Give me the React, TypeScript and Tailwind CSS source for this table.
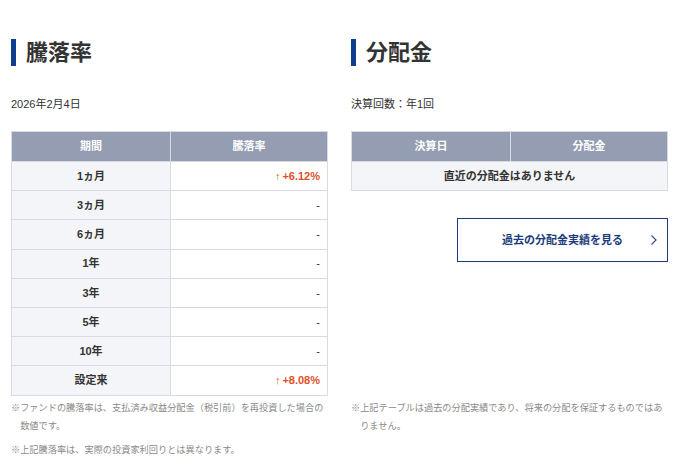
import React from 'react'

const font = { fontFamily: '"Liberation Sans", "Noto Sans CJK JP", sans-serif' }

const rows = [
    { label: '1ヵ月', value: '+6.12%' },
    { label: '3ヵ月', value: '-' },
    { label: '6ヵ月', value: '-' },
    { label: '1年', value: '-' },
    { label: '3年', value: '-' },
    { label: '5年', value: '-' },
    { label: '10年', value: '-' },
    { label: '設定来', value: '+8.08%' },
]

const Heading = ({ title }: { title: string }) => (
    <div className="flex items-center h-[27px]">
        <span className="w-[5px] h-[27px] bg-[#0f3e8f]" />
        <h2 className="ml-[10px] text-[22px] leading-[27px] font-bold text-[#333]">{title}</h2>
    </div>
)

const Value = ({ v }: { v: string }) =>
    v === '-' ? (
        <span className="text-[#333]">-</span>
    ) : (
        <span className="text-[#e0502a] font-bold">
            <span className="font-normal text-[11px] mr-[2px]">↑</span>
            {v}
        </span>
    )

export default function App() {
    return (
        <div className="w-[687px] h-[470px] bg-white pl-[11px] pt-[39px]" style={font}>
            <div className="grid grid-cols-[317px_317px] gap-x-[23px]">
                {/* 騰落率 */}
                <div>
                    <Heading title="騰落率" />
                    <p className="mt-[30px] text-[11px] leading-[16px] text-[#333]">2026年2月4日</p>
                    <div className="mt-[19px] border border-[#d8dbe3] text-[11px]">
                        <div className="flex h-[29px] bg-[#959db2] text-white font-bold">
                            <div className="w-[159px] flex items-center justify-center border-r border-[#d8dbe3]">期間</div>
                            <div className="flex-1 flex items-center justify-center">騰落率</div>
                        </div>
                        {rows.map((r) => (
                            <div key={r.label} className="flex h-[29.2px] border-t border-[#d8dbe3]">
                                <div className="w-[159px] flex items-center justify-center bg-[#f4f5f8] border-r border-[#d8dbe3] font-bold text-[#333]">
                                    {r.label}
                                </div>
                                <div className="flex-1 flex items-center justify-end pr-[7px]">
                                    <Value v={r.value} />
                                </div>
                            </div>
                        ))}
                    </div>
                </div>

                {/* 分配金 */}
                <div>
                    <Heading title="分配金" />
                    <p className="mt-[30px] text-[11px] leading-[16px] text-[#333]">決算回数：年1回</p>
                    <div className="mt-[19px] border border-[#d8dbe3] text-[11px]">
                        <div className="flex h-[29px] bg-[#959db2] text-white font-bold">
                            <div className="w-[159px] flex items-center justify-center border-r border-[#d8dbe3]">決算日</div>
                            <div className="flex-1 flex items-center justify-center">分配金</div>
                        </div>
                        <div className="flex h-[29.2px] items-center justify-center border-t border-[#d8dbe3] bg-[#f4f5f8] font-bold text-[#333]">
                            直近の分配金はありません
                        </div>
                    </div>
                    <div className="flex justify-end mt-[27px]">
                        <button
                            type="button"
                            className="relative w-[211px] h-[44px] border border-[#1c3c7c] flex items-center justify-center text-[11px] font-bold text-[#1c3c7c]"
                        >
                            過去の分配金実績を見る
                            <svg
                                className="absolute right-[9px] top-1/2 -translate-y-1/2"
                                width="8"
                                height="12"
                                viewBox="0 0 8 12"
                                fill="none"
                                stroke="#3b4f80"
                                strokeWidth="1.2"
                            >
                                <path d="M1.5 1.5 L6 6 L1.5 10.5" />
                            </svg>
                        </button>
                    </div>
                </div>

                {/* notes */}
                <div className="mt-[3px] text-[9.2px] leading-[18px] text-[#8a8a8a]">
                    <p className="whitespace-nowrap">
                        ※ファンドの騰落率は、支払済み収益分配金（税引前）を再投資した場合の
                    </p>
                    <p className="pl-[1em]">数値です。</p>
                    <p className="mt-[6px]">※上記騰落率は、実際の投資家利回りとは異なります。</p>
                </div>
                <div className="mt-[3px] text-[9.2px] leading-[18px] text-[#8a8a8a]">
                    <p className="whitespace-nowrap">
                        ※上記テーブルは過去の分配実績であり、将来の分配を保証するものではあ
                    </p>
                    <p className="pl-[1em]">りません。</p>
                </div>
            </div>
        </div>
    )
}
